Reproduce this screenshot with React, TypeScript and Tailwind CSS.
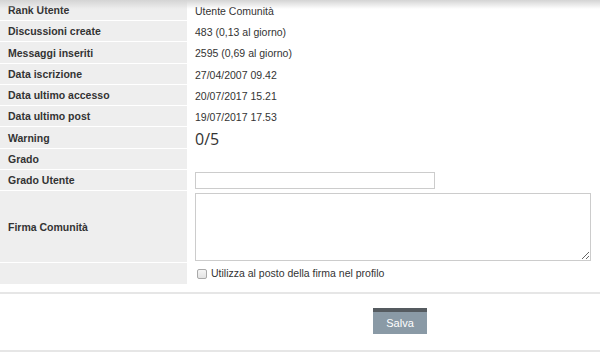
import React from "react";

const rows: { label: string; value: React.ReactNode; h: string }[] = [
  { label: "Rank Utente", value: "Utente Comunità", h: "h-[21px]" },
  { label: "Discussioni create", value: "483 (0,13 al giorno)", h: "h-[21px]" },
  { label: "Messaggi inseriti", value: "2595 (0,69 al giorno)", h: "h-[22px]" },
  { label: "Data iscrizione", value: "27/04/2007 09.42", h: "h-[21px]" },
  { label: "Data ultimo accesso", value: "20/07/2017 15.21", h: "h-[21px]" },
  { label: "Data ultimo post", value: "19/07/2017 17.53", h: "h-[21px]" },
  {
    label: "Warning",
    value: <span className="font-['Open_Sans',sans-serif] text-[16px] leading-none">0/5</span>,
    h: "h-[22px]",
  },
  { label: "Grado", value: "", h: "h-[21px]" },
];

export default function App() {
  return (
    <div className="relative w-[600px] h-[357px] bg-white overflow-hidden font-['Liberation_Sans',Arial,sans-serif] text-[10.5px] text-[#333]">
      {/* top shade from the header above */}
      <div className="absolute inset-x-0 top-0 h-[9px] bg-gradient-to-b from-[#d4d4d4] to-transparent pointer-events-none" />

      <div className="flex flex-col">
        {rows.map((r) => (
          <div key={r.label} className={`flex ${r.h}`}>
            <div className="w-[187px] shrink-0 bg-[#eeeeee] border-b border-white pl-2 pt-[2px] flex items-center font-bold">
              {r.label}
            </div>
            <div className="pl-2 pt-[2px] flex items-center">{r.value}</div>
          </div>
        ))}

        <div className="flex h-[21px]">
          <div className="w-[187px] shrink-0 bg-[#eeeeee] border-b border-white pl-2 pt-[2px] flex items-center font-bold">
            Grado Utente
          </div>
          <div className="pl-2 flex items-center">
            <input
              type="text"
              className="w-[240px] h-[17px] border border-[#cccccc] bg-white outline-none"
            />
          </div>
        </div>

        <div className="flex h-[72px]">
          <div className="w-[187px] shrink-0 bg-[#eeeeee] border-b border-white pl-2 pt-[2px] flex items-center font-bold">
            Firma Comunità
          </div>
          <div className="pl-2 pt-[2px]">
            <textarea className="block w-[396px] h-[68px] border border-[#cccccc] bg-white outline-none resize-y" />
          </div>
        </div>

        <div className="flex h-[21px]">
          <div className="w-[187px] shrink-0 bg-[#eeeeee]" />
          <label className="pl-[10px] flex items-center gap-[4px]">
            <span className="w-[10px] h-[10px] border border-[#a9a9a9] rounded-[2px] bg-gradient-to-b from-[#f5f5f5] to-[#e3e3e3]" />
            Utilizza al posto della firma nel profilo
          </label>
        </div>

        <div className="mt-[8px] border-t-2 border-[#e6e6e6]" />

        <div className="flex pt-[14px] pl-[373px] pb-[16px]">
          <button className="w-[54px] h-[26px] bg-[#8a9aa6] border-t-[4px] border-[#555b60] text-white text-[11px]">
            Salva
          </button>
        </div>

        <div className="border-t-2 border-[#e6e6e6]" />
      </div>
    </div>
  );
}
